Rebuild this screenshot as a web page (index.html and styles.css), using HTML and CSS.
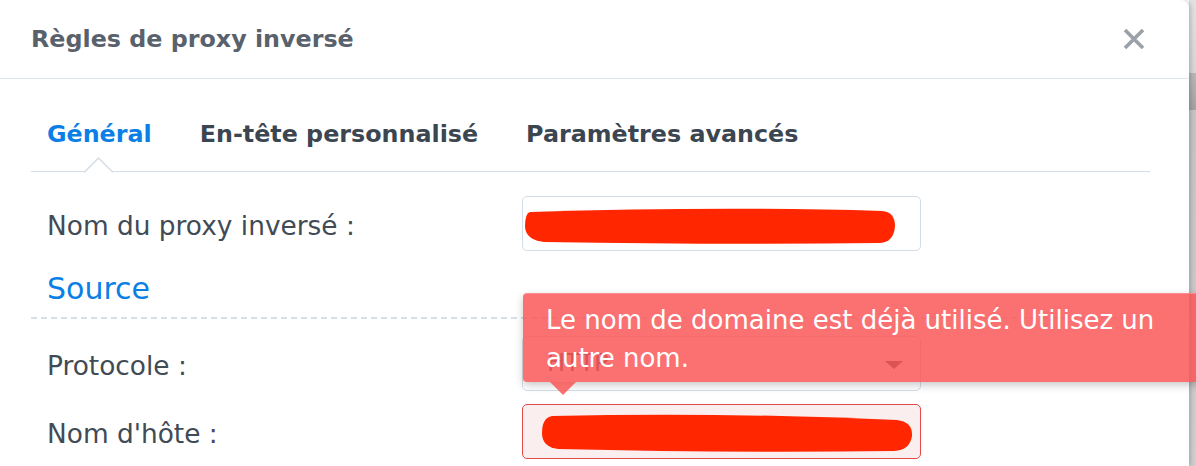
FILE: index.html
```
<!DOCTYPE html>
<html lang="fr">
<head>
    <meta charset="utf-8">
    <title>Règles de proxy inversé</title>
    <link rel="stylesheet" href="styles.css">
</head>
<body>
    <div class="page">
        <div class="dialog">
            <div class="header">
                <span class="title">Règles de proxy inversé</span>
                <svg class="close" width="22" height="20" viewBox="0 0 22 20">
                    <path d="M2 1 L20 19 M20 1 L2 19" stroke="#9ba1a8" stroke-width="3.6" fill="none"/>
                </svg>
            </div>
            <div class="body">
                <div class="tabs">
                    <span class="tab active">Général</span>
                    <span class="tab">En-tête personnalisé</span>
                    <span class="tab">Paramètres avancés</span>
                    <svg class="notch" width="29" height="16" viewBox="0 0 29 16">
                        <path d="M0 15.5 L14.5 1 L29 15.5" stroke="#d5dde6" stroke-width="1.5" fill="#fff"/>
                    </svg>
                </div>
                <div class="form">
                    <div class="row">
                        <label class="label">Nom du proxy inversé :</label>
                        <div class="field">
                            <svg class="mask" width="399" height="55" viewBox="0 0 399 55">
                                <path d="M8 16 Q 200 10 360 15 Q 373 16 373 30 Q 372 46 358 47 Q 200 49 22 46 Q 4 44 3 31 Q 3 17 8 16 Z" fill="#ff2600"/>
                            </svg>
                        </div>
                    </div>
                    <div class="section">Source</div>
                    <div class="row">
                        <label class="label">Protocole :</label>
                        <div class="field select">
                            <span class="value">HTTP</span>
                            <span class="caret"></span>
                        </div>
                    </div>
                    <div class="row">
                        <label class="label">Nom d'hôte :</label>
                        <div class="field invalid">
                            <span class="value">h</span>
                            <svg class="mask" width="399" height="55" viewBox="0 0 399 55">
                                <path d="M30 12 Q 200 8 375 16 Q 391 18 390 32 Q 388 46 372 47 Q 200 49 36 45 Q 20 43 20 29 Q 20 14 30 12 Z" fill="#ff2600"/>
                            </svg>
                        </div>
                    </div>
                </div>
            </div>
        </div>
        <div class="backdrop"></div>
    </div>
    <div class="tooltip">
        Le nom de domaine est déjà utilisé. Utilisez un autre nom.
        <span class="arrow"></span>
    </div>
</body>
</html>
```

FILE: styles.css
```
html, body{
    margin: 0;
    padding: 0;
    width: 1196px;
    height: 466px;
    overflow: hidden;
    background: #fff;
    font-family: "DejaVu Sans", Verdana, sans-serif;
}

.page{
    display: flex;
    height: 466px;
}

.dialog{
    width: 1189px;
    height: 466px;
    background: #fff;
    border-top-right-radius: 8px;
    box-shadow: 2px 0 4px rgba(0,0,0,0.18);
    position: relative;
    z-index: 1;
}

.backdrop{
    flex: 1;
    background: linear-gradient(to bottom, #e2e2e2 0, #d6d6d6 73px, #b7b7b7 73px, #a3a3a3 110px, #c4c4c4 110px, #cfcfcf 466px);
}

/* header */
.header{
    height: 78px;
    border-bottom: 1px solid #e0e6ed;
    display: flex;
    align-items: center;
    justify-content: space-between;
    padding: 0 44px 0 31px;
}
.title{
    font-size: 23.8px;
    font-weight: bold;
    color: #59626c;
    margin-top: -1px;
}
.close{
    display: block;
    margin-top: -1px;
}

/* tabs */
.body{
    margin: 0 39px 0 31px;
}
.tabs{
    position: relative;
    height: 92px;
    display: flex;
    align-items: flex-end;
    gap: 48px;
    padding-left: 16px;
    border-bottom: 1.5px solid #d5dde6;
}
.tab{
    font-size: 23.8px;
    font-weight: bold;
    color: #3b4651;
    line-height: 28px;
    padding-bottom: 23px;
}
.tab.active{
    color: #0b7fe6;
}
.notch{
    position: absolute;
    left: 53px;
    bottom: -1.5px;
}

/* form */
.form{
    padding-top: 24px;
}
.row{
    display: flex;
    align-items: center;
    padding-left: 16px;
    margin-bottom: 13px;
}
.label{
    width: 475px;
    font-size: 26.4px;
    color: #414b55;
    padding-top: 3px;
}
.field{
    position: relative;
    width: 397px;
    height: 53px;
    border: 1px solid #d3dde7;
    border-radius: 5px;
    background: #fff;
}
.field .value{
    position: absolute;
    left: 24px;
    top: 12px;
    font-size: 24px;
    color: #414b55;
}
.field .mask{
    position: absolute;
    left: -1px;
    top: -1px;
}
.select .caret{
    position: absolute;
    right: 17px;
    top: 24px;
    border-left: 9px solid transparent;
    border-right: 9px solid transparent;
    border-top: 8px solid #4b555f;
}
.invalid{
    border-color: #e34a4a;
    background: #fbeeee;
}

.section{
    font-size: 30px;
    color: #0b7fe6;
    line-height: 36px;
    padding: 7px 0 12px 16px;
    margin-bottom: 17px;
    background: repeating-linear-gradient(to right, #d6dee7 0 6px, transparent 6px 10px) left bottom / 100% 2px no-repeat;
}

/* tooltip */
.tooltip{
    position: absolute;
    left: 523px;
    top: 293px;
    width: 720px;
    height: 89px;
    padding: 7px 52px 0 23px;
    box-sizing: border-box;
    font-size: 26px;
    line-height: 38px;
    color: #fff;
    background: rgba(250, 84, 84, 0.83);
    border-top: 1px solid rgba(255, 160, 160, 0.6);
    border-radius: 4px 0 0 4px;
    box-shadow: 0 3px 9px rgba(0,0,0,0.22);
    z-index: 5;
}
.arrow{
    position: absolute;
    left: 27px;
    bottom: -13px;
    border-left: 13px solid transparent;
    border-right: 13px solid transparent;
    border-top: 13px solid rgba(250, 84, 84, 0.83);
}
```
